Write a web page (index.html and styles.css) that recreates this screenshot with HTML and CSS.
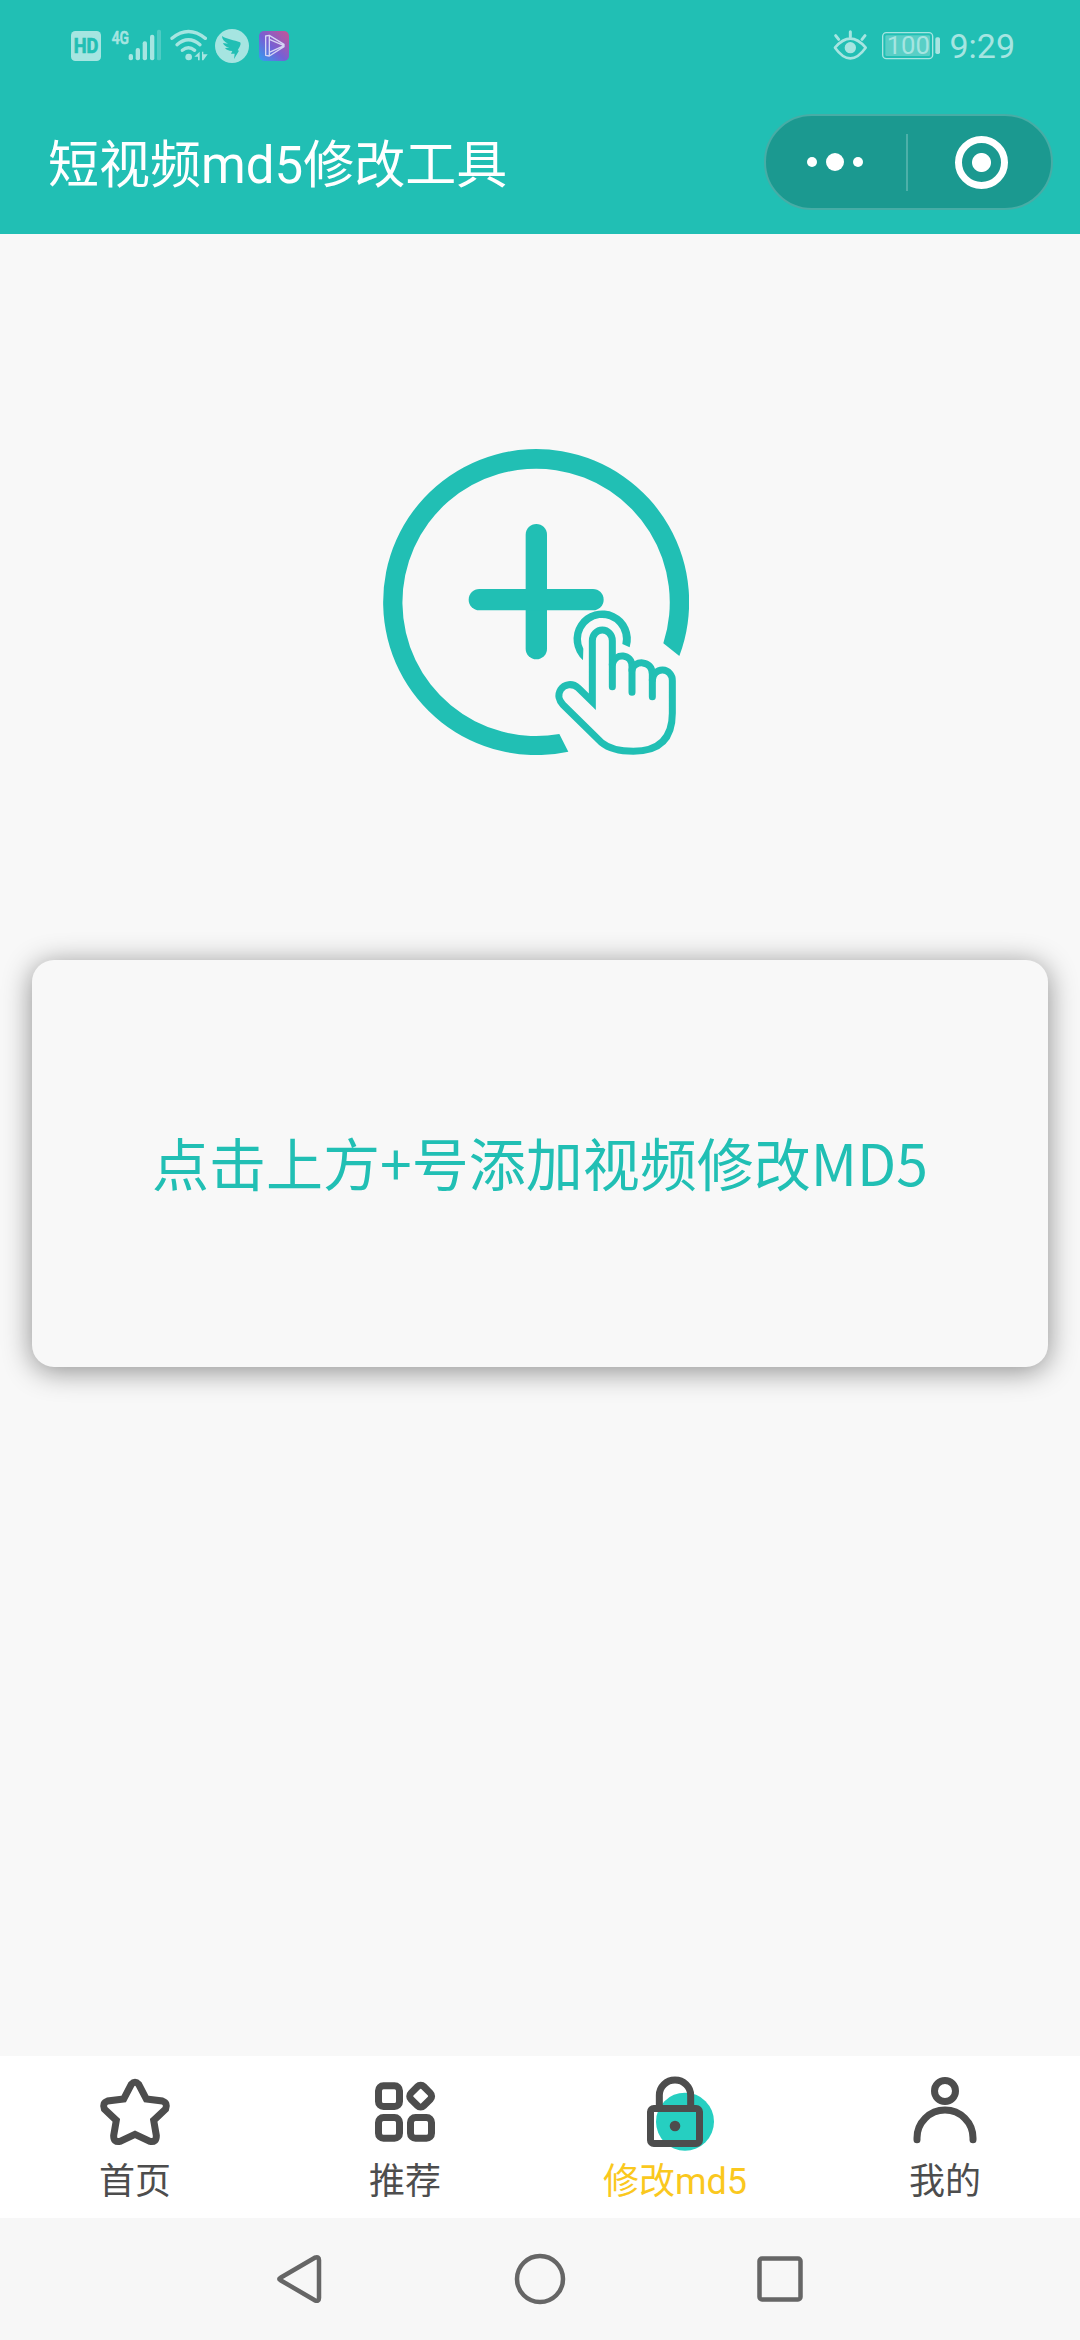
FILE: index.html
```html
<!DOCTYPE html>
<html lang="zh-CN">
<head>
<meta charset="utf-8">
<title>短视频md5修改工具</title>
<link rel="stylesheet" href="styles.css">
</head>
<body>
<div class="screen">
  <header class="header">
    <div class="status">
      <div class="status-left">
        <svg width="30" height="70" viewBox="63 0 90 210">
          <rect class="light" x="63" y="63" width="90" height="90" rx="13"/>
          <text class="hd" x="108" y="128" text-anchor="middle" textLength="74" lengthAdjust="spacingAndGlyphs">HD</text>
        </svg>
        <svg class="signal" width="50" height="70" viewBox="183 0 150 210">
          <text class="net" x="185" y="101" textLength="52" lengthAdjust="spacingAndGlyphs">4G</text>
          <g class="light">
            <rect x="236" y="132" width="13" height="19" rx="6"/>
            <rect x="257" y="114" width="13" height="37" rx="6"/>
            <rect x="278" y="94" width="13" height="57" rx="6"/>
            <rect x="300" y="74" width="13" height="77" rx="6"/>
            <rect x="321" y="59" width="12" height="92" rx="5" opacity=".35"/>
          </g>
        </svg>
        <svg class="wifi" width="38" height="70" viewBox="360 0 114 210">
          <g class="light-line" stroke-width="10">
            <path d="M366 85Q415 44 466 85"/>
            <path d="M381 104Q415 74 450 104"/>
            <path d="M397 121Q415 106 434 121"/>
          </g>
          <circle class="light" cx="416" cy="141" r="10"/>
          <path class="light" d="M433 140L449 125V151H444V140ZM456 125H460V133L473 133L460 151H456Z"/>
        </svg>
        <svg class="bird" width="34" height="70" viewBox="495 0 102 210">
          <circle class="light" cx="546" cy="108" r="51"/>
          <path class="teal" d="M516 78C530 88 553 90 570 97C575 101 568 113 563 121L567 122L552 147L554 131H543L547 123C535 123 529 119 525 114L538 113C527 111 521 105 519 99L534 101C522 94 516 88 516 78Z"/>
        </svg>
        <svg class="play" width="30" height="70" viewBox="627 0 90 210">
          <defs>
            <linearGradient id="g" x1="0" y1="1" x2="1" y2="0">
              <stop offset="0" stop-color="#2fa0f0"/><stop offset=".45" stop-color="#7560d5"/><stop offset="1" stop-color="#c65596"/>
            </linearGradient>
          </defs>
          <rect x="627" y="63" width="90" height="90" rx="15" fill="url(#g)"/>
          <path class="play-line" d="M647 78L658 76L702 103V110L658 138L647 136ZM658 76V138M658 88L702 107L658 127"/>
        </svg>
      </div>
      <div class="status-right">
        <svg width="35" height="70" viewBox="66 0 105 210">
          <g class="light-line" stroke-width="8">
            <path d="M72 113Q118 59 164 113Q118 177 72 113Z"/>
            <path d="M118 65V80M74 77L83 88M162 77L153 88" stroke-width="9"/>
          </g>
          <circle class="light" cx="118" cy="113" r="17"/>
        </svg>
        <svg class="battery" width="60" height="70" viewBox="210 0 180 210">
          <rect class="light-line" x="215" y="68" width="150" height="78" rx="11" stroke-width="4"/>
          <rect class="light" x="223" y="76" width="134" height="62" rx="4" opacity=".42"/>
          <rect class="light" x="373" y="82" width="14" height="50" rx="5"/>
          <text class="level" x="292" y="132" text-anchor="middle" textLength="130" lengthAdjust="spacingAndGlyphs">100</text>
        </svg>
        <span class="time">9:29</span>
      </div>
    </div>
    <div class="titlebar">
      <h1 class="title">短视频md5修改工具</h1>
      <div class="capsule">
        <div class="capsule-part more"><i class="dot"></i><i class="dot big"></i><i class="dot"></i></div>
        <i class="divider"></i>
        <div class="capsule-part close"><i class="target"></i></div>
      </div>
    </div>
  </header>

  <main class="content">
    <svg class="add" width="306" height="306" viewBox="69 57 918 918">
      <path class="teal" d="M625 965A459 459 0 1 1 958 678L910 640A401 401 0 1 0 598 912Z"/>
      <rect class="teal" x="497" y="282" width="64" height="406" rx="32"/>
      <rect class="teal" x="326" y="477" width="405" height="64" rx="32"/>
      <path class="teal" d="M669 691A86 86 0 1 1 809 652L787 642A63 63 0 1 0 670 656Z"/>
      <g class="hand">
        <path d="M757 770V632A30 32 0 0 0 697 632V815L655 774C637 758 613 762 602 779C592 795 597 812 609 824L725 938C749 958 780 964 820 964C899 964 937 925 937 850V752A30 31 0 0 0 877 750"/>
        <path d="M757 703C765 667 816 670 816 710V787"/>
        <path d="M816 720C820 691 877 688 877 733V800"/>
      </g>
    </svg>
    <section class="card"><p class="hint">点击上方+号添加视频修改MD5</p></section>
  </main>

  <nav class="tabs">
    <a class="tab">
      <svg width="80" height="82" viewBox="105 96 240 246">
        <path class="icon" d="M214 133Q225 121 236 133L259 177L307 183Q324 189 317 207L281 241L289 287Q289 308 270 304L225 283L180 304Q161 308 161 287L169 241L133 207Q126 189 143 183L191 177Z"/>
      </svg>
      <span>首页</span>
    </a>
    <a class="tab">
      <svg width="80" height="82" viewBox="915 96 240 246">
        <g class="icon">
          <rect x="955.500" y="137.500" width="63" height="62" rx="15"/>
          <rect x="955.500" y="232.500" width="63" height="62" rx="15"/>
          <rect x="1051.500" y="232.500" width="63" height="62" rx="15"/>
          <rect x="1055" y="141.500" width="54" height="54" rx="13" transform="rotate(45 1082 168.500)"/>
        </g>
      </svg>
      <span>推荐</span>
    </a>
    <a class="tab active">
      <svg width="80" height="82" viewBox="225 96 240 246">
        <circle class="spot" cx="375" cy="245" r="87"/>
        <g class="icon">
          <rect x="271.500" y="205.500" width="147" height="105" rx="10"/>
          <path d="M298 204V166A47 46 0 0 1 392 166V204"/>
        </g>
        <circle class="key" cx="345" cy="258" r="16"/>
      </svg>
      <span>修改md5</span>
    </a>
    <a class="tab">
      <svg width="80" height="82" viewBox="1035 96 240 246">
        <g class="icon">
          <circle cx="1155" cy="153" r="31.500"/>
          <path d="M1071 299V294A84 84 0 0 1 1239 294V299"/>
        </g>
      </svg>
      <span>我的</span>
    </a>
  </nav>

  <footer class="sysnav">
    <svg width="50" height="54" viewBox="0 0 50 54"><path class="sys" d="M5.500 25.800L39.800 5.700Q44 4 44 8V46Q44 50 39.800 48.300L5.500 28.200Q3 27 5.500 25.800Z"/></svg>
    <svg width="54" height="54" viewBox="0 0 54 54"><circle class="sys" cx="27" cy="27" r="23"/></svg>
    <svg width="50" height="54" viewBox="0 0 50 54"><rect class="sys" x="4.500" y="6.500" width="41" height="41" rx="2.500"/></svg>
  </footer>
</div>
</body>
</html>
```
FILE: styles.css
```css
body {
  margin: 0;
  font-family: Roboto, "Noto Sans CJK SC", sans-serif;
}

.screen {
  display: flex;
  flex-direction: column;
  width: 1080px;
  height: 2340px;
  background: #f8f8f8;
  overflow: hidden;
}

svg { display: block; flex: none; }

.header {
  height: 234px;
  background: #21bfb4;
}

.status {
  display: flex;
  justify-content: space-between;
  height: 90px;
  box-sizing: border-box;
  padding: 10px 65px 0 71px;
}

.status-left,
.status-right { display: flex; height: 70px; }

.signal { margin-left: 10px; }
.wifi { margin-left: 9px; }
.bird { margin-left: 7px; }
.play { margin-left: 10px; }
.battery { margin: 0 8px 0 13px; }

.light { fill: #a6e5e1; }
.teal { fill: #21bfb4; }
.light-line { fill: none; stroke: #a6e5e1; stroke-linecap: round; stroke-linejoin: round; }
.hd { font-size: 58px; font-weight: 700; fill: #21bfb4; stroke: #21bfb4; stroke-width: 2; }
.net { font-size: 56px; font-weight: 500; fill: #a6e5e1; stroke: #a6e5e1; stroke-width: 2; }
.level { font-size: 77px; fill: #a6e5e1; }
.play-line { fill: none; stroke: #d5d5f5; stroke-width: 4; stroke-linejoin: round; }

.time {
  font-size: 34px;
  line-height: 72px;
  color: #a6e5e1;
}

.titlebar {
  display: flex;
  justify-content: space-between;
  align-items: center;
  height: 144px;
  box-sizing: border-box;
  padding: 0 27px 0 48px;
}

.title {
  margin: 0;
  padding-top: 8px;
  font-size: 51px;
  font-weight: 400;
  line-height: 72px;
  color: #fff;
}

.capsule {
  display: flex;
  align-items: center;
  width: 289px;
  height: 96px;
  box-sizing: border-box;
  border: 2px solid #47ada6;
  border-radius: 48px;
  background: #1b9990;
}

.capsule-part {
  display: flex;
  flex: 1;
  align-items: center;
  justify-content: center;
}

.more { gap: 9px; padding-right: 1px; }
.close { padding-left: 5px; }

.dot { width: 10px; height: 10px; border-radius: 50%; background: #fff; }
.big { width: 18px; height: 18px; }
.divider { width: 2px; height: 57px; background: #4db0a9; }

.target {
  width: 53px;
  height: 53px;
  box-sizing: border-box;
  border: 7px solid #fff;
  border-radius: 50%;
  background: radial-gradient(circle, #fff 9px, transparent 10px);
}

.content {
  display: flex;
  flex: 1;
  flex-direction: column;
  padding: 215px 32px 0;
}

.add { margin-left: 351px; }

.hand {
  fill: none;
  stroke: #21bfb4;
  stroke-width: 21;
  stroke-linecap: round;
}

.card {
  display: flex;
  align-items: center;
  justify-content: center;
  height: 407px;
  margin-top: 205px;
  border-radius: 22px;
  background: #f8f8f8;
  box-shadow: 0 4px 29px rgba(0, 0, 0, .44);
}

.hint {
  margin: 0;
  padding-bottom: 6px;
  font-family: "Noto Sans CJK SC", sans-serif;
  font-size: 57px;
  line-height: 84px;
  color: #21bfb4;
  white-space: nowrap;
}

.tabs {
  display: grid;
  grid-template-columns: repeat(4, 1fr);
  height: 162px;
  background: #fff;
}

.tab {
  display: flex;
  flex-direction: column;
  align-items: center;
  padding-top: 16px;
  font-size: 36px;
  line-height: 56px;
  color: #4d4d4d;
}

.active { color: #fac81e; }

.icon {
  fill: none;
  stroke: #4d4d4d;
  stroke-width: 21;
  stroke-linecap: round;
}
.key { fill: #4d4d4d; }
.spot { fill: #26cfc1; }

.sysnav {
  display: flex;
  align-items: center;
  justify-content: center;
  gap: 188px;
  height: 122px;
  background: #f7f7f7;
}

.sys {
  fill: none;
  stroke: #666;
  stroke-width: 4.500;
  stroke-linejoin: round;
}
```
